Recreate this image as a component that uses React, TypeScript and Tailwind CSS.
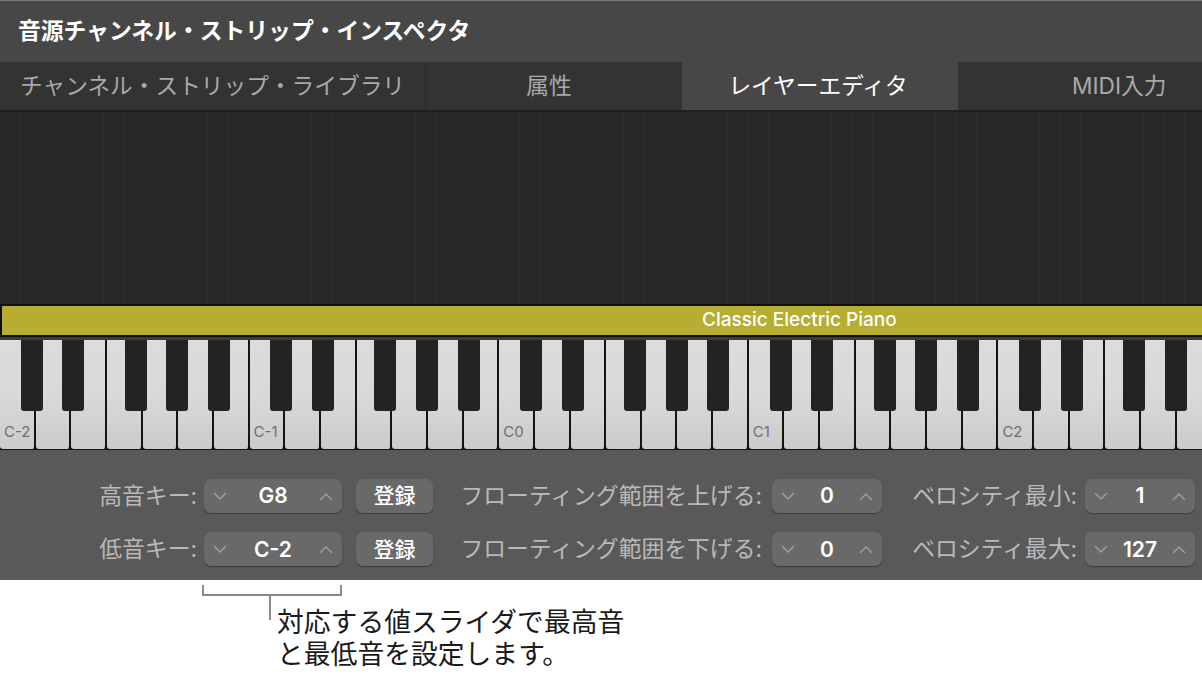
import { Fragment } from "react";

const TABS = [
  { label: "チャンネル・ストリップ・ライブラリ", w: "w-[425px]", cls: "pl-[20px] text-[#a9a9a9] bg-[#333333]" },
  { label: "属性", w: "w-[257px]", cls: "justify-center pr-[10px] text-[#a9a9a9] bg-[#333333] border-l border-[#2a2a2a]" },
  { label: "レイヤーエディタ", w: "w-[276px]", cls: "justify-center pr-[4px] text-white bg-[#474747]" },
  { label: "MIDI入力", w: "flex-1", cls: "pl-[114px] text-[#a9a9a9] bg-[#333333]" },
];

const OCTAVE = 249.6;
const SEMI = 20.8;
const BLACK_STEPS = [1, 3, 6, 8, 10];
const blackKeys: number[] = [];
for (let o = 0; o < 5; o++) {
  for (const s of BLACK_STEPS) blackKeys.push(o * OCTAVE + s * SEMI);
}
const LABELS: Record<number, string> = { 0: "C-2", 7: "C-1", 14: "C0", 21: "C1", 28: "C2" };

function Chevron({ up }: { up?: boolean }) {
  return (
    <svg width="14" height="9" viewBox="0 0 14 9" fill="none" stroke="#9c9c9c" strokeWidth="1.6" strokeLinecap="round" strokeLinejoin="round">
      {up ? <polyline points="1.5,7.5 7,2 12.5,7.5" /> : <polyline points="1.5,1.5 7,7 12.5,1.5" />}
    </svg>
  );
}

function Stepper({ value, w }: { value: string; w: string }) {
  return (
    <div className={`${w} flex h-[34px] items-center justify-between rounded-[7px] bg-[#696969] px-[9px] shadow-[0_1px_1px_rgba(0,0,0,0.35)]`}>
      <Chevron />
      <span className="font-['Inter',sans-serif] text-[21px] font-semibold text-white">{value}</span>
      <Chevron up />
    </div>
  );
}

function Row({ keyLabel, keyValue, floatLabel, velLabel, velValue }: { keyLabel: string; keyValue: string; floatLabel: string; velLabel: string; velValue: string }) {
  return (
    <div className="flex items-center">
      <div className="w-[198px] pr-[1px] text-right text-[#b9b9b9]">{keyLabel}</div>
      <div className="ml-[6px]">
        <Stepper value={keyValue} w="w-[138px]" />
      </div>
      <div className="ml-[14px] flex h-[34px] w-[77px] items-center justify-center rounded-[7px] bg-[#696969] text-[21px] font-medium text-white shadow-[0_1px_1px_rgba(0,0,0,0.35)]">
        登録
      </div>
      <div className="w-[329px] text-right text-[#b9b9b9]">{floatLabel}</div>
      <div className="ml-[10px]">
        <Stepper value="0" w="w-[110px]" />
      </div>
      <div className="w-[195px] text-right text-[#b9b9b9]">{velLabel}</div>
      <div className="ml-[8px]">
        <Stepper value={velValue} w="w-[110px]" />
      </div>
    </div>
  );
}

export default function App() {
  return (
    <div className="flex h-[684px] w-[1202px] flex-col overflow-hidden bg-white font-['Inter','Noto_Sans_CJK_JP',sans-serif]">
      {/* Title */}
      <div className="flex h-[62px] shrink-0 items-center border-t border-[#7a7a7a] bg-[#474747] pl-[18px] text-[22.8px] font-bold text-white">
        音源チャンネル・ストリップ・インスペクタ
      </div>

      {/* Tabs */}
      <div className="flex h-[48px] shrink-0 shadow-[inset_0_2px_2px_rgba(0,0,0,0.25)]">
        {TABS.map((t) => (
          <div key={t.label} className={`${t.w} ${t.cls} flex items-center text-[22.7px]`}>
            {t.label}
          </div>
        ))}
      </div>

      {/* Layer grid */}
      <div className="flex h-[194px] shrink-0 overflow-hidden border-t-2 border-[#1f1f1f] bg-[#282828]">
        {Array.from({ length: 58 }, (_, i) => (
          <div key={i} className="h-full w-[20.8px] shrink-0 border-r border-[#2d2d2d]" />
        ))}
      </div>

      {/* Layer bar */}
      <div className="flex h-[33px] shrink-0 items-center border-y-2 border-l-2 border-[#0e0e0e] bg-[#b6ad31] pl-[700px] text-[19px] font-medium text-white">
        Classic Electric Piano
      </div>
      <div className="h-[3px] shrink-0 bg-[#3c3c3c]" />

      {/* Keyboard */}
      <div className="relative flex h-[110px] shrink-0 overflow-hidden bg-[#141414]">
        {Array.from({ length: 34 }, (_, i) => (
          <div
            key={i}
            className="relative h-[109px] w-[35.66px] shrink-0 rounded-b-[3px] border-r-2 border-[#141414] bg-gradient-to-b from-[#dcdcdc] via-[#d9d9d9] to-[#cbcbcb]"
          >
            {LABELS[i] && (
              <span className="absolute bottom-[6px] left-[4px] font-['Inter',sans-serif] text-[15px] text-[#6e6e6e]">
                {LABELS[i]}
              </span>
            )}
          </div>
        ))}
        {blackKeys.map((x, i) => (
          <Fragment key={i}>
            <div className="absolute top-0 h-[71px] w-[22px] rounded-b-[3px] bg-[#232323]" style={{ left: x }} />
          </Fragment>
        ))}
      </div>

      {/* Controls */}
      <div className="flex h-[130px] shrink-0 flex-col gap-[19px] bg-[#595959] pt-[29px] text-[22.8px]">
        <Row keyLabel="高音キー:" keyValue="G8" floatLabel="フローティング範囲を上げる:" velLabel="ベロシティ最小:" velValue="1" />
        <Row keyLabel="低音キー:" keyValue="C-2" floatLabel="フローティング範囲を下げる:" velLabel="ベロシティ最大:" velValue="127" />
      </div>

      {/* Callout */}
      <div className="flex-1 bg-white">
        <div className="ml-[202px] mt-[5px] h-[11px] w-[140px] border-2 border-t-0 border-[#8c8c8c]" />
        <div className="flex">
          <div className="ml-[269px] h-[24px] w-[2px] bg-[#8c8c8c]" />
          <div className="ml-[6px] mt-[10px] text-[26.8px] leading-[32px] text-[#1a1a1a]">
            対応する値スライダで最高音
            <br />
            と最低音を設定します。
          </div>
        </div>
      </div>
    </div>
  );
}
